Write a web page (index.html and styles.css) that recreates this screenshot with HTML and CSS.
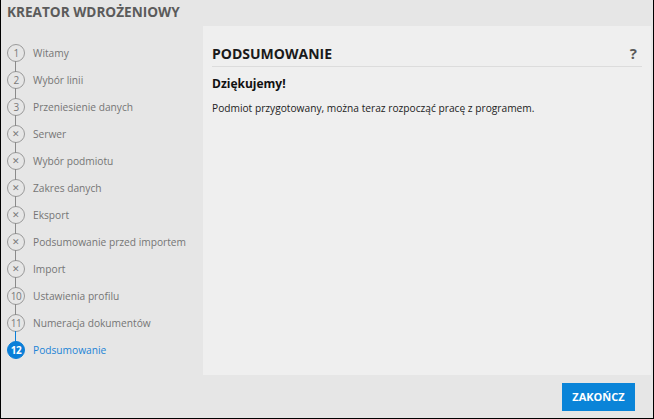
FILE: index.html
```html
<!DOCTYPE html>
<html lang="pl">
<head>
    <meta charset="UTF-8">
    <meta name="viewport" content="width=device-width, initial-scale=1.0">
    <title>Kreator wdrożeniowy</title>
    <link rel="stylesheet" href="styles.css">
</head>
<body>
    <div class="window">
        <div class="title">KREATOR WDROŻENIOWY</div>
        <div class="main">
            <ul class="steps">
                <li class="step"><span class="dot">1</span><span class="label">Witamy</span></li>
                <li class="step"><span class="dot">2</span><span class="label">Wybór linii</span></li>
                <li class="step"><span class="dot">3</span><span class="label">Przeniesienie danych</span></li>
                <li class="step skipped"><span class="dot">&#x2715;</span><span class="label">Serwer</span></li>
                <li class="step skipped"><span class="dot">&#x2715;</span><span class="label">Wybór podmiotu</span></li>
                <li class="step skipped"><span class="dot">&#x2715;</span><span class="label">Zakres danych</span></li>
                <li class="step skipped"><span class="dot">&#x2715;</span><span class="label">Eksport</span></li>
                <li class="step skipped"><span class="dot">&#x2715;</span><span class="label">Podsumowanie przed importem</span></li>
                <li class="step skipped"><span class="dot">&#x2715;</span><span class="label">Import</span></li>
                <li class="step"><span class="dot">10</span><span class="label">Ustawienia profilu</span></li>
                <li class="step"><span class="dot">11</span><span class="label">Numeracja dokumentów</span></li>
                <li class="step active"><span class="dot">12</span><span class="label">Podsumowanie</span></li>
            </ul>
            <div class="panel">
                <div class="panel-head">
                    <h2>PODSUMOWANIE</h2>
                    <span class="help">?</span>
                </div>
                <h3>Dziękujemy!</h3>
                <p>Podmiot przygotowany, można teraz rozpocząć pracę z programem.</p>
            </div>
        </div>
        <div class="footer">
            <button class="finish">ZAKOŃCZ</button>
        </div>
    </div>
</body>
</html>
```

FILE: styles.css
```css
body {
    margin: 0;
    font-family: "Open Sans", "Noto Sans", sans-serif;
    background: #e6e6e6;
}
.window {
    width: 654px;
    height: 419px;
    box-sizing: border-box;
    border: 1px solid #000;
    border-top: none;
    background: #e6e6e6;
    display: flex;
    flex-direction: column;
}
.title {
    height: 26px;
    padding-left: 6px;
    font-size: 13.6px;
    font-weight: bold;
    line-height: 24px;
    color: #5b5b5b;
}
.main {
    display: flex;
    height: 349px;
    padding-right: 2px;
}
.steps {
    list-style: none;
    margin: 0;
    padding: 13px 0 0 6px;
    width: 196px;
}
.step {
    display: flex;
    align-items: center;
    height: 27px;
    position: relative;
    font-size: 10.2px;
    color: #757575;
}
.step + .step::before {
    content: "";
    position: absolute;
    left: 8px;
    top: -5px;
    height: 11px;
    border-left: 1px solid #8a8a8a;
}
.dot {
    width: 16px;
    height: 16px;
    border: 1px solid #9a9a9a;
    border-radius: 50%;
    display: flex;
    align-items: center;
    justify-content: center;
    font-size: 10px;
    color: #7a7a7a;
    background: #e6e6e6;
    letter-spacing: -0.5px;
}
.skipped .dot {
    font-size: 9px;
    font-weight: 300;
}
.label {
    margin-left: 8px;
}
.active .dot {
    background: #0a7fd8;
    border-color: #0a7fd8;
    color: #fff;
    font-weight: bold;
}
.active .label {
    color: #1c84d6;
}
.active::before {
    border-color: #0a7fd8 !important;
}
.panel {
    flex: 1;
    background: #efefef;
    padding: 14px 9px 0 9px;
}
.panel-head {
    display: flex;
    justify-content: space-between;
    align-items: center;
    border-bottom: 1px solid #dcdcdc;
    height: 26px;
}
h2 {
    margin: 0;
    font-size: 14px;
    font-weight: bold;
    color: #1a1a1a;
}
.help {
    font-size: 15px;
    font-weight: bold;
    color: #5a5a5a;
    margin-right: 5px;
}
h3 {
    margin: 8px 0 0 0;
    font-size: 12px;
    font-weight: bold;
    color: #111;
}
p {
    margin: 9px 0 0 0;
    font-size: 10.2px;
    color: #222;
}
.footer {
    flex: 1;
    display: flex;
    justify-content: flex-end;
    align-items: center;
    padding-right: 18px;
}
.finish {
    width: 73px;
    height: 28px;
    border: none;
    background: #0a84d8;
    color: #fff;
    font-family: "Open Sans", sans-serif;
    font-size: 11px;
    font-weight: bold;
    cursor: pointer;
}
```
